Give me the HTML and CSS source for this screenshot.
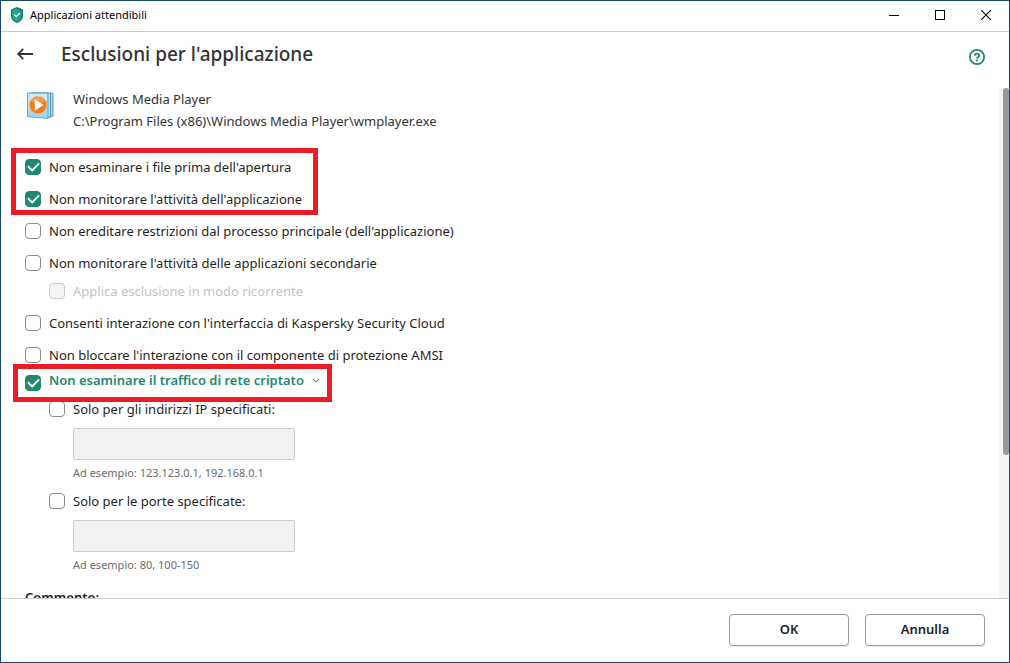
FILE: index.html
```html
<!DOCTYPE html>
<html lang="it">
<head>
  <meta charset="UTF-8" />
  <meta name="viewport" content="width=device-width, initial-scale=1" />
  <title>Applicazioni attendibili</title>
  <link rel="stylesheet" href="styles.css">
</head>
<body>
  <div class="window">

    <div class="titlebar">
      <svg class="shield" width="14" height="16" viewBox="0 0 14 16">
        <path d="M7 0 L13 2.6 V9 C13 12.5 10 14.8 7 16 C4 14.8 1 12.5 1 9 V2.6 Z" fill="#127a62"/>
        <path d="M7 1.6 L11.8 3.7 V9 C11.8 11.8 9.4 13.7 7 14.7 Z" fill="#1c9c80"/>
        <path d="M7 1.6 L2.2 3.7 V9 C2.2 11.8 4.6 13.7 7 14.7 Z" fill="#25a88c"/>
        <path d="M4.2 7.6 L6.3 9.7 L10 6" fill="none" stroke="#fff" stroke-width="1.3"/>
      </svg>
      <span class="titlebar-text">Applicazioni attendibili</span>
      <div class="win-buttons">
        <button type="button" aria-label="Riduci a icona">
          <svg width="10" height="10" viewBox="0 0 10 10"><path d="M0 5.5 H10" stroke="#000"/></svg>
        </button>
        <button type="button" aria-label="Ingrandisci">
          <svg width="10" height="10" viewBox="0 0 10 10"><rect x="0.5" y="0.5" width="9" height="9" fill="none" stroke="#000"/></svg>
        </button>
        <button type="button" aria-label="Chiudi">
          <svg width="10" height="10" viewBox="0 0 10 10"><path d="M0 0 L10 10 M10 0 L0 10" stroke="#000" stroke-width="1.1"/></svg>
        </button>
      </div>
    </div>

    <header class="header">
      <button type="button" class="back" aria-label="Indietro">
        <svg width="16" height="12" viewBox="0 0 16 12"><path d="M6.2 0.8 L1.2 6 L6.2 11.2 M1.2 6 H16" fill="none" stroke="#333" stroke-width="1.8"/></svg>
      </button>
      <h1>Esclusioni per l'applicazione</h1>
      <button type="button" class="help" aria-label="Guida">
        <svg width="16" height="16" viewBox="0 0 16 16" fill="none" stroke="#1d8971">
          <circle cx="8" cy="8" r="7.1" stroke-width="1.8"/>
          <path d="M5.9 6.7 C5.9 4.1 10.1 4.1 10.1 6.5 C10.1 8 8 7.9 8 9.5" stroke-width="1.8"/>
          <path d="M8 10.5 V12.2" stroke-width="1.9"/>
        </svg>
      </button>
    </header>

    <div class="body">
      <form class="content" id="exclusions">
        <div class="app">
          <svg class="app-icon" width="30" height="28" viewBox="0 0 30 28">
            <path d="M22 25 L29 23.6 L27 22 Z" fill="#ddd"/>
            <path d="M7 1 L26 1.5 V24 L21 25.5 Z" fill="#a9d5ec" stroke="#4e9cc4"/>
            <path d="M4 1 L23.5 1 V25 L18 26 Z" fill="#b8def1" stroke="#4e9cc4"/>
            <path d="M0.5 1 H21 V26.5 L0.5 24.5 Z" fill="#a5d4ee" stroke="#5fa9cf"/>
            <path d="M1.5 2 H20 V8 L1.5 18 Z" fill="#cdeafa"/>
            <circle cx="11" cy="13" r="8.8" fill="#f07a1c" stroke="#f7c391" stroke-width="0.8"/>
            <path d="M4 9 A8.2 8.2 0 0 1 18 9 C14 12 8 12 4 9" fill="#f79a4b"/>
            <path d="M7.8 7.3 L16.6 13 L7.8 18.7 Z" fill="#fff"/>
          </svg>
          <div class="app-text">
            <div>Windows Media Player</div>
            <div>C:\Program Files (x86)\Windows Media Player\wmplayer.exe</div>
          </div>
        </div>

        <div class="group marked marked-first">
          <label class="check"><input type="checkbox" checked><span>Non esaminare i file prima dell'apertura</span></label>
          <label class="check"><input type="checkbox" checked><span>Non monitorare l'attività dell'applicazione</span></label>
        </div>
        <div class="group">
          <label class="check"><input type="checkbox"><span>Non ereditare restrizioni dal processo principale (dell'applicazione)</span></label>
          <div class="subgroup">
            <label class="check"><input type="checkbox"><span>Non monitorare l'attività delle applicazioni secondarie</span></label>
            <label class="check nested"><input type="checkbox" disabled><span>Applica esclusione in modo ricorrente</span></label>
          </div>
          <label class="check"><input type="checkbox"><span>Consenti interazione con l'interfaccia di Kaspersky Security Cloud</span></label>
          <label class="check"><input type="checkbox"><span>Non bloccare l'interazione con il componente di protezione AMSI</span></label>
        </div>

        <div class="check traffic marked marked-traffic">
          <input type="checkbox" id="traffic" checked aria-label="Non esaminare il traffico di rete criptato">
          <button type="button" class="expand">Non esaminare il traffico di rete criptato
            <svg width="8" height="5" viewBox="0 0 8 5"><path d="M0.8 0.8 L4 3.8 L7.2 0.8" fill="none" stroke="#777" stroke-width="1.1"/></svg>
          </button>
        </div>

        <div class="limit nested">
          <label class="check"><input type="checkbox"><span>Solo per gli indirizzi IP specificati:</span></label>
          <input type="text" class="field" aria-label="Indirizzi IP" aria-describedby="ip-hint" disabled>
          <p class="hint" id="ip-hint">Ad esempio: 123.123.0.1, 192.168.0.1</p>
        </div>
        <div class="limit nested">
          <label class="check"><input type="checkbox"><span>Solo per le porte specificate:</span></label>
          <input type="text" class="field" aria-label="Porte" aria-describedby="port-hint" disabled>
          <p class="hint" id="port-hint">Ad esempio: 80, 100-150</p>
        </div>

        <h2>Commento:</h2>
      </form>
      <div class="scrollbar"><div class="thumb"></div></div>
    </div>

    <footer class="footer">
      <button type="submit" form="exclusions">OK</button>
      <button type="button">Annulla</button>
    </footer>

  </div>
</body>
</html>
```
FILE: styles.css
```css
* {
  box-sizing: border-box;
}
body {
  margin: 0;
  font-family: "Noto Sans", "Open Sans", sans-serif;
  font-size: 13px;
  line-height: 20px;
  color: #1f1f1f;
}
button {
  font: inherit;
  color: inherit;
  background: none;
  border: none;
  padding: 0;
  cursor: pointer;
}
svg {
  display: block;
}
.window {
  display: flex;
  flex-direction: column;
  height: 100vh;
  background: white;
  border: 1px solid #1b4a70;
}

/* title bar */
.titlebar {
  display: flex;
  align-items: center;
  height: 31px;
  padding: 0 0 2px 9px;
  border-bottom: 1px solid #ccc;
}
.titlebar-text {
  margin-left: 6px;
  font-size: 11px;
  color: #000;
}
.win-buttons {
  display: flex;
  margin-left: auto;
}
.win-buttons button {
  display: flex;
  align-items: center;
  justify-content: center;
  width: 46px;
  height: 28px;
}

/* page header */
.header {
  display: flex;
  align-items: center;
  height: 56px;
  padding: 0 24px 12px 16px;
}
.back {
  margin-right: 28px;
}
h1 {
  margin: 0;
  font-size: 19px;
  line-height: 28px;
  font-weight: 500;
  color: #333;
}
.help {
  margin-left: auto;
  padding-top: 6px;
}

/* scrolling part */
.body {
  display: flex;
  flex: 1;
  min-height: 0;
}
.content {
  flex: 1;
  padding: 0 0 24px 24px;
  overflow: auto;
  scrollbar-width: none;
}
.scrollbar {
  width: 10px;
  padding-left: 4px;
  background: #f4f4f4;
}
.thumb {
  height: 72%;
  background: #999;
  border-radius: 3px;
}
.app {
  display: flex;
  color: #333;
}
.app-icon {
  margin: 4px 16px 0 2px;
}
.app-text {
  line-height: 22px;
}
.group {
  display: flex;
  flex-direction: column;
  align-items: flex-start;
  gap: 12px;
  margin-top: 12px;
}
.subgroup {
  display: flex;
  flex-direction: column;
  align-items: flex-start;
  gap: 8px;
}
.app + .group {
  margin-top: 25px;
}
.check {
  display: flex;
  align-items: center;
  width: fit-content;
}
.check input {
  appearance: none;
  flex: none;
  width: 16px;
  height: 16px;
  margin: 0 8px 0 0;
  border: 1px solid #8c8c8c;
  border-radius: 4px;
  background: white;
}
.check input:checked {
  display: grid;
  place-items: center;
  border-color: #1d8971;
  background: #1d8971;
}
.check input:checked::before {
  content: "";
  width: 9px;
  height: 5px;
  margin-bottom: 3px;
  border: solid white;
  border-width: 0 0 2px 2px;
  transform: rotate(-45deg);
}
.check input:disabled {
  border-color: #ccc;
  background: #f4f4f4;
}
.check input:disabled + span {
  color: #c4c4c4;
}
.nested {
  margin-left: 24px;
}
.traffic {
  align-items: flex-end;
  margin-top: 5px;
}
.expand {
  display: flex;
  align-items: center;
  gap: 8px;
  padding-bottom: 1px;
  font-weight: 600;
  color: #1d8971;
}

/* red frames round the options to tick */
.marked {
  position: relative;
}
.marked::after {
  content: "";
  position: absolute;
  border: 5px solid #ed1c24;
  pointer-events: none;
}
.marked-first {
  width: fit-content;
}
.marked-first::after {
  inset: -9px -16px -6px -14px;
}
.marked-traffic::after {
  inset: -6px -12px -11px -12px;
}

/* IP and port limits */
.limit {
  margin-top: 8px;
}
.limit + .limit {
  margin-top: 10px;
}
.field {
  display: block;
  width: 222px;
  height: 32px;
  margin: 9px 0 5px 24px;
  border: 1px solid #ccc;
  border-radius: 2px;
  background: #f1f1f1;
}
.hint {
  margin: 0 0 0 24px;
  font-size: 11px;
  line-height: 16px;
  color: #6b6b6b;
}
h2 {
  margin: 14px 0 0;
  font-size: 13px;
  line-height: 20px;
  font-weight: 600;
}

.footer {
  display: flex;
  justify-content: flex-end;
  gap: 16px;
  padding: 15px 24px 16px;
  border-top: 1px solid #ccc;
}
.footer button {
  width: 120px;
  height: 32px;
  padding-bottom: 2px;
  font-weight: 600;
  border: 1px solid #999;
  border-radius: 4px;
  box-shadow: 0 1px 1px rgba(0,0,0,0.1);
}
```
